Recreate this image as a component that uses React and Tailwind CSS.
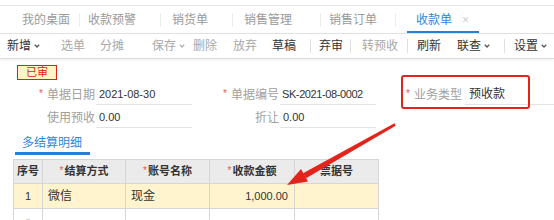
import React from 'react';

const tabs = [
  { label: '我的桌面', w: 'w-[80px]', pl: 'pl-[22px]' },
  { label: '收款预警', w: 'w-[81px]', pl: 'pl-[8px]' },
  { label: '销货单', w: 'w-[72px]', pl: 'pl-[11px]' },
  { label: '销售管理', w: 'w-[88px]', pl: 'pl-[11px]' },
  { label: '销售订单', w: 'w-[75px]', pl: 'pl-[8px]' },
];

// toolbar items, each gets a fixed slot width so labels land where the original has them
const tools = [
  { label: '新增', w: 'w-[54px]', chev: true },
  { label: '选单', w: 'w-[39px]', dim: true },
  { label: '分摊', w: 'w-[52px]', dim: true },
  { label: '保存', w: 'w-[41px]', dim: true, chev: true },
  { label: '删除', w: 'w-[40px]', dim: true },
  { label: '放弃', w: 'w-[39px]', dim: true },
  { label: '草稿', w: 'w-[38px]' },
  { sep: true, w: 'w-[9px]' },
  { label: '弃审', w: 'w-[31px]' },
  { sep: true, w: 'w-[12px]' },
  { label: '转预收', w: 'w-[45px]', dim: true },
  { sep: true, w: 'w-[10px]' },
  { label: '刷新', w: 'w-[40px]' },
  { label: '联查', w: 'w-[47px]', chev: true },
  { sep: true, w: 'w-[10px]' },
  { label: '设置', w: 'w-[40px]', chev: true },
];

function Chevron({ color }) {
  return (
    <svg width="6" height="4" viewBox="0 0 6 4" className="ml-[3px]">
      <path d="M0.8 0.8 L3 3 L5.2 0.8" fill="none" stroke={color} strokeWidth="1.3" />
    </svg>
  );
}

function Label({ w, pr, star, children }) {
  return (
    <div className={`flex items-center justify-end ${w} ${pr} text-[#a0a0a0] text-[12px]`}>
      {star && <span className="text-[#e8574d] text-[10px] mr-[4px] -mt-[2px]">*</span>}
      {children}
    </div>
  );
}

function Value({ w, pl, className = '', children }) {
  return (
    <div className={`flex items-center ${w} ${pl} border-b border-[#e3e3e3] text-[#333] ${className}`}>
      {children}
    </div>
  );
}

const cols = ['w-[29px]', 'w-[83px]', 'w-[84px]', 'w-[85px]', 'w-[84px]'];

function Star() {
  return <span className="text-[#e8574d] font-normal text-[10px] mr-[1px] -mt-[3px]">*</span>;
}

export default function App() {
  return (
    <div className="relative w-[554px] h-[220px] overflow-hidden bg-white font-['Liberation_Sans','Noto_Sans_CJK_SC',sans-serif] text-[12px]">
      <div className="h-[5px]" />

      {/* page tabs */}
      <div className="flex h-[29px] items-center border-y border-[#e4e4e4] text-[#9a9a9a]">
        {tabs.map((t) => (
          <div key={t.label} className={`flex items-center ${t.w}`}>
            <div className={`flex-1 ${t.pl}`}>{t.label}</div>
            <span className="w-px h-[14px] bg-[#ececec]" />
          </div>
        ))}
        <div className="ml-[11px] w-[72px] h-full flex items-center border-b-2 border-[#2580d6] pt-[2px] pl-[9px] text-[#2d86da]">
          收款单
          <span className="ml-[10px] text-[#cccccc] text-[12px]">×</span>
        </div>
      </div>

      {/* toolbar */}
      <div className="flex h-[25px] items-center pl-[7px] border-b border-[#dcdcdc] shadow-[0_1px_3px_rgba(0,0,0,0.08)]">
        {tools.map((t, i) =>
          t.sep ? (
            <div key={i} className={t.w}>
              <div className="w-px h-[14px] bg-[#e0e0e0]" />
            </div>
          ) : (
            <div
              key={i}
              className={`flex items-center ${t.w} ${t.dim ? 'text-[#a8a8a8]' : 'text-[#333]'}`}
            >
              {t.label}
              {t.chev && <Chevron color={t.dim ? '#b0b0b0' : '#555'} />}
            </div>
          ),
        )}
      </div>

      {/* status badge */}
      <div className="mt-[6px] ml-[17px] w-[40px] h-[15px] flex items-center justify-center border-[1.5px] border-[#d8251b] bg-[#fff5c4] text-[#d8251b] text-[11px] leading-none">
        已审
      </div>

      {/* header form */}
      <div className="mt-[4px] flex h-[21px]">
        <Label w="w-[96px]" pr="pr-[1px]" star>单据日期</Label>
        <Value w="w-[96px]" pl="pl-[3px]" className="text-[11px]">2021-08-30</Value>
        <Label w="w-[88px]" pr="pr-[1px]" star>单据编号</Label>
        <Value w="w-[96px]" pl="pl-[2px]" className="text-[11px] tracking-[-0.4px]">SK-2021-08-0002</Value>
        <Label w="w-[89px]" pr="pr-[3px]" star>业务类型</Label>
        <Value w="w-[89px]" pl="pl-[4px]" className="text-[12px]">预收款</Value>
      </div>
      <div className="mt-[2px] flex h-[21px]">
        <Label w="w-[96px]" pr="pr-[1px]">使用预收</Label>
        <Value w="w-[96px]" pl="pl-[3px]" className="text-[11px]">0.00</Value>
        <Label w="w-[88px]" pr="pr-[1px]">折让</Label>
        <Value w="w-[96px]" pl="pl-[3px]" className="text-[11px]">0.00</Value>
      </div>

      {/* detail tab */}
      <div className="mt-[5px] ml-[15px] w-[75px] h-[22px] flex items-center pl-[7px] border-b-[3px] border-[#2580d6] text-[#2d86da]">
        多结算明细
      </div>

      {/* detail table */}
      <div className="mt-[4px] ml-[13px] w-[366px] border-l border-t border-[#d6d6d6]">
        <div className="flex bg-[#ebebeb] font-bold text-[11px] text-[#333]">
          <div className={`${cols[0]} h-[24px] flex items-center justify-center border-r border-b border-[#d6d6d6]`}>序号</div>
          <div className={`${cols[1]} h-[24px] flex items-center justify-center border-r border-b border-[#d6d6d6]`}><Star />结算方式</div>
          <div className={`${cols[2]} h-[24px] flex items-center justify-center border-r border-b border-[#d6d6d6]`}><Star />账号名称</div>
          <div className={`${cols[3]} h-[24px] flex items-center justify-center border-r border-b border-[#d6d6d6]`}><Star />收款金额</div>
          <div className={`${cols[4]} h-[24px] flex items-center justify-center border-r border-b border-[#d6d6d6]`}>票据号</div>
        </div>
        <div className="flex bg-[#fff4cd] text-[#333]">
          <div className={`${cols[0]} h-[25px] flex items-center justify-center border-r border-b border-[#d6d6d6] text-[11px]`}>1</div>
          <div className={`${cols[1]} h-[25px] flex items-center pl-[5px] border-r border-b border-[#d6d6d6]`}>微信</div>
          <div className={`${cols[2]} h-[25px] flex items-center pl-[5px] border-r border-b border-[#d6d6d6]`}>现金</div>
          <div className={`${cols[3]} h-[25px] flex items-center justify-end pr-[6px] border-r border-b border-[#d6d6d6] text-[11px]`}>1,000.00</div>
          <div className={`${cols[4]} h-[25px] border-r border-b border-[#d6d6d6]`} />
        </div>
        <div className="flex text-[#c8c8c8]">
          <div className={`${cols[0]} h-[25px] flex items-start pt-[6px] justify-center border-r border-b border-[#d6d6d6] text-[11px]`}>2</div>
          <div className={`${cols[1]} h-[25px] border-r border-b border-[#d6d6d6]`} />
          <div className={`${cols[2]} h-[25px] border-r border-b border-[#d6d6d6]`} />
          <div className={`${cols[3]} h-[25px] border-r border-b border-[#d6d6d6]`} />
          <div className={`${cols[4]} h-[25px] border-r border-b border-[#d6d6d6]`} />
        </div>
      </div>

      {/* annotation: red box around 业务类型 and arrow to the amount */}
      <div className="absolute left-[401px] top-[75px] w-[129px] h-[34px] border-2 border-[#e3241c] rounded-[3px]" />
      <svg className="absolute left-0 top-0 pointer-events-none" width="554" height="220">
        <polygon
          points="394.5,123.3 395.7,125.7 306,178.3 303,173.3"
          fill="#e3241c"
        />
        <polygon points="287,185 301,169 308,181.5" fill="#e3241c" />
      </svg>
    </div>
  );
}
